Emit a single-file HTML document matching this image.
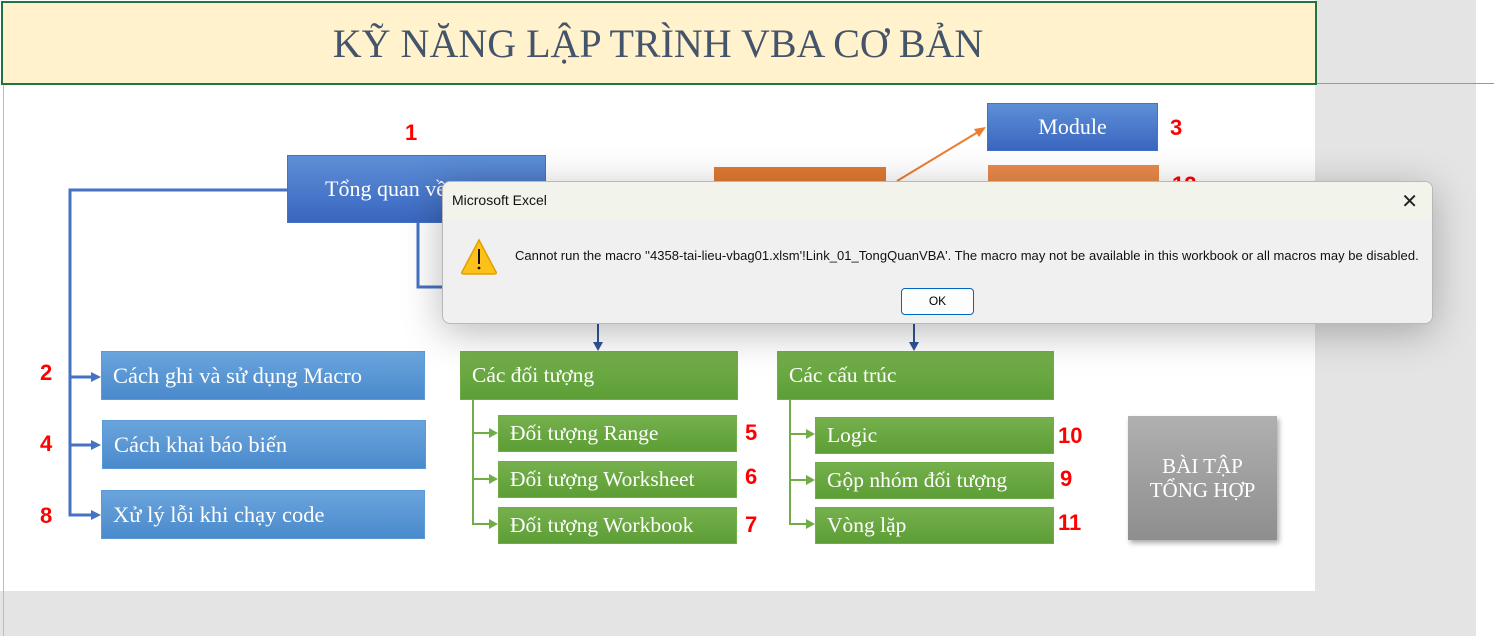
<!DOCTYPE html>
<html><head><meta charset="utf-8"><style>
*{margin:0;padding:0;box-sizing:border-box}
body{width:1494px;height:636px;overflow:hidden;background:#fff;position:relative;font-family:"Liberation Serif",serif}
.a{position:absolute}
.box{position:absolute;color:#fff;font-family:"Liberation Serif",serif;font-size:21.5px;display:flex;align-items:center;white-space:nowrap}
.blue{background:linear-gradient(#5d8fd6,#3a66c0);border:1px solid #4472c4}
.lb{background:linear-gradient(#6aa4dc,#4a8acc);border:1px solid #5b9bd5;padding-left:11px;font-size:22.5px}
.gr{background:linear-gradient(#75b04c,#5d9e36);border:1px solid #70ad47;padding-left:11px}
.num{position:absolute;color:#f00;font-family:"Liberation Sans",sans-serif;font-weight:bold;font-size:22px}
</style></head><body>
<div class="a" style="left:1315px;top:0;width:161px;height:636px;background:#e4e4e4"></div>
<div class="a" style="left:0;top:591px;width:1315px;height:45px;background:#e4e4e4"></div>
<div class="a" style="left:3px;top:83px;width:1px;height:553px;background:#bbb"></div>
<div class="a" style="left:1315px;top:83px;width:179px;height:1px;background:#999"></div>
<div class="a" style="left:1px;top:1px;width:1316px;height:84px;background:#fff2cc;border:2px solid #217346"></div>
<div class="a" style="left:0;top:20px;width:1316px;text-align:center;font-size:40px;color:#44546a;font-family:'Liberation Serif',serif">KỸ NĂNG LẬP TRÌNH VBA CƠ BẢN</div>

<svg class="a" style="left:0;top:0" width="1315" height="591">
<g stroke="#4472c4" stroke-width="3" fill="none">
<path d="M287 190H70V515H92M70 377H92M70 445H92"/>
<path d="M418 222V287H445"/>
</g>
<g fill="#4472c4"><path d="M101 377l-10-5v10z"/><path d="M101 445l-10-5v10z"/><path d="M101 515l-10-5v10z"/></g>
<g stroke="#2f5597" stroke-width="2"><path d="M598 324V343M914 324V343"/></g>
<g fill="#2f5597"><path d="M598 351l-5-9h10z"/><path d="M914 351l-5-9h10z"/></g>
<g stroke="#70ad47" stroke-width="2" fill="none"><path d="M473 400V524H490M473 433H490M473 479H490"/><path d="M790 400V524H807M790 434H807M790 480H807"/></g>
<g fill="#70ad47"><path d="M498 433l-9-5v10z"/><path d="M498 479l-9-5v10z"/><path d="M498 524l-9-5v10z"/><path d="M815 434l-9-5v10z"/><path d="M815 480l-9-5v10z"/><path d="M815 524l-9-5v10z"/></g>
<path d="M897 181L978 132" stroke="#ed7d31" stroke-width="2"/><path d="M986 127l-12 2 5 8z" fill="#ed7d31"/>
</svg>

<div class="box blue" style="left:287px;top:155px;width:259px;height:68px;padding-left:37px;font-size:22px">Tổng quan về</div>
<div class="num" style="left:405px;top:120px">1</div>
<div class="box blue" style="left:987px;top:103px;width:171px;height:48px;justify-content:center;font-size:22px">Module</div>
<div class="num" style="left:1170px;top:115px">3</div>
<div class="a" style="left:714px;top:167px;width:172px;height:40px;background:#e07a32"></div>
<div class="a" style="left:988px;top:165px;width:171px;height:40px;background:#e8894a"></div>
<div class="num" style="left:1172px;top:172px">12</div>

<div class="box lb" style="left:101px;top:351px;width:324px;height:49px">Cách ghi và sử dụng Macro</div>
<div class="num" style="left:40px;top:360px">2</div>
<div class="box lb" style="left:102px;top:420px;width:324px;height:49px">Cách khai báo biến</div>
<div class="num" style="left:40px;top:431px">4</div>
<div class="box lb" style="left:101px;top:490px;width:324px;height:49px">Xử lý lỗi khi chạy code</div>
<div class="num" style="left:40px;top:503px">8</div>

<div class="box gr" style="left:460px;top:351px;width:278px;height:49px">Các đối tượng</div>
<div class="box gr" style="left:498px;top:415px;width:239px;height:37px">Đối tượng Range</div>
<div class="box gr" style="left:498px;top:461px;width:239px;height:37px">Đối tượng Worksheet</div>
<div class="box gr" style="left:498px;top:507px;width:239px;height:37px">Đối tượng Workbook</div>
<div class="num" style="left:745px;top:420px">5</div>
<div class="num" style="left:745px;top:464px">6</div>
<div class="num" style="left:745px;top:512px">7</div>

<div class="box gr" style="left:777px;top:351px;width:277px;height:49px">Các cấu trúc</div>
<div class="box gr" style="left:815px;top:417px;width:239px;height:37px">Logic</div>
<div class="box gr" style="left:815px;top:462px;width:239px;height:37px">Gộp nhóm đối tượng</div>
<div class="box gr" style="left:815px;top:507px;width:239px;height:37px">Vòng lặp</div>
<div class="num" style="left:1058px;top:423px">10</div>
<div class="num" style="left:1060px;top:466px">9</div>
<div class="num" style="left:1058px;top:510px">11</div>

<div class="a" style="left:1128px;top:416px;width:149px;height:124px;background:linear-gradient(#b0b0b0,#8e8e8e);box-shadow:2px 3px 5px rgba(0,0,0,.35);color:#fff;font-size:21px;text-align:center;padding-top:38px;line-height:24px">BÀI TẬP<br>TỔNG HỢP</div>

<div class="a" style="left:442px;top:181px;width:991px;height:143px;border-radius:8px;background:#f0f0f0;border:1px solid #b8b8b8;box-shadow:0 8px 40px rgba(0,0,0,.28);overflow:hidden;font-family:'Liberation Sans',sans-serif">
<div style="height:37px;background:#f2f4ec;font-size:14px;color:#111;padding:10px 0 0 9px">Microsoft Excel</div>
<div class="a" style="right:14px;top:7px;font-size:20px;color:#222;font-family:'DejaVu Sans',sans-serif">✕</div>
<svg class="a" style="left:17px;top:56px" width="38" height="37"><path d="M19 2L36 34Q37 36 34 36H4Q1 36 2 34Z" fill="#fcc21b" stroke="#e0a000" stroke-width="1.5"/><path d="M19 11V26" stroke="#111" stroke-width="2"/><circle cx="19" cy="30" r="1.4" fill="#111"/></svg>
<div class="a" style="left:72px;top:66px;font-size:13px;color:#111;white-space:nowrap;letter-spacing:0.03px">Cannot run the macro ''4358-tai-lieu-vbag01.xlsm'!Link_01_TongQuanVBA'. The macro may not be available in this workbook or all macros may be disabled.</div>
<div class="a" style="left:458px;top:106px;width:73px;height:27px;border:1px solid #0067c0;border-radius:4px;background:#fdfdfd;font-size:12px;text-align:center;line-height:25px">OK</div>
</div>
</body></html>
